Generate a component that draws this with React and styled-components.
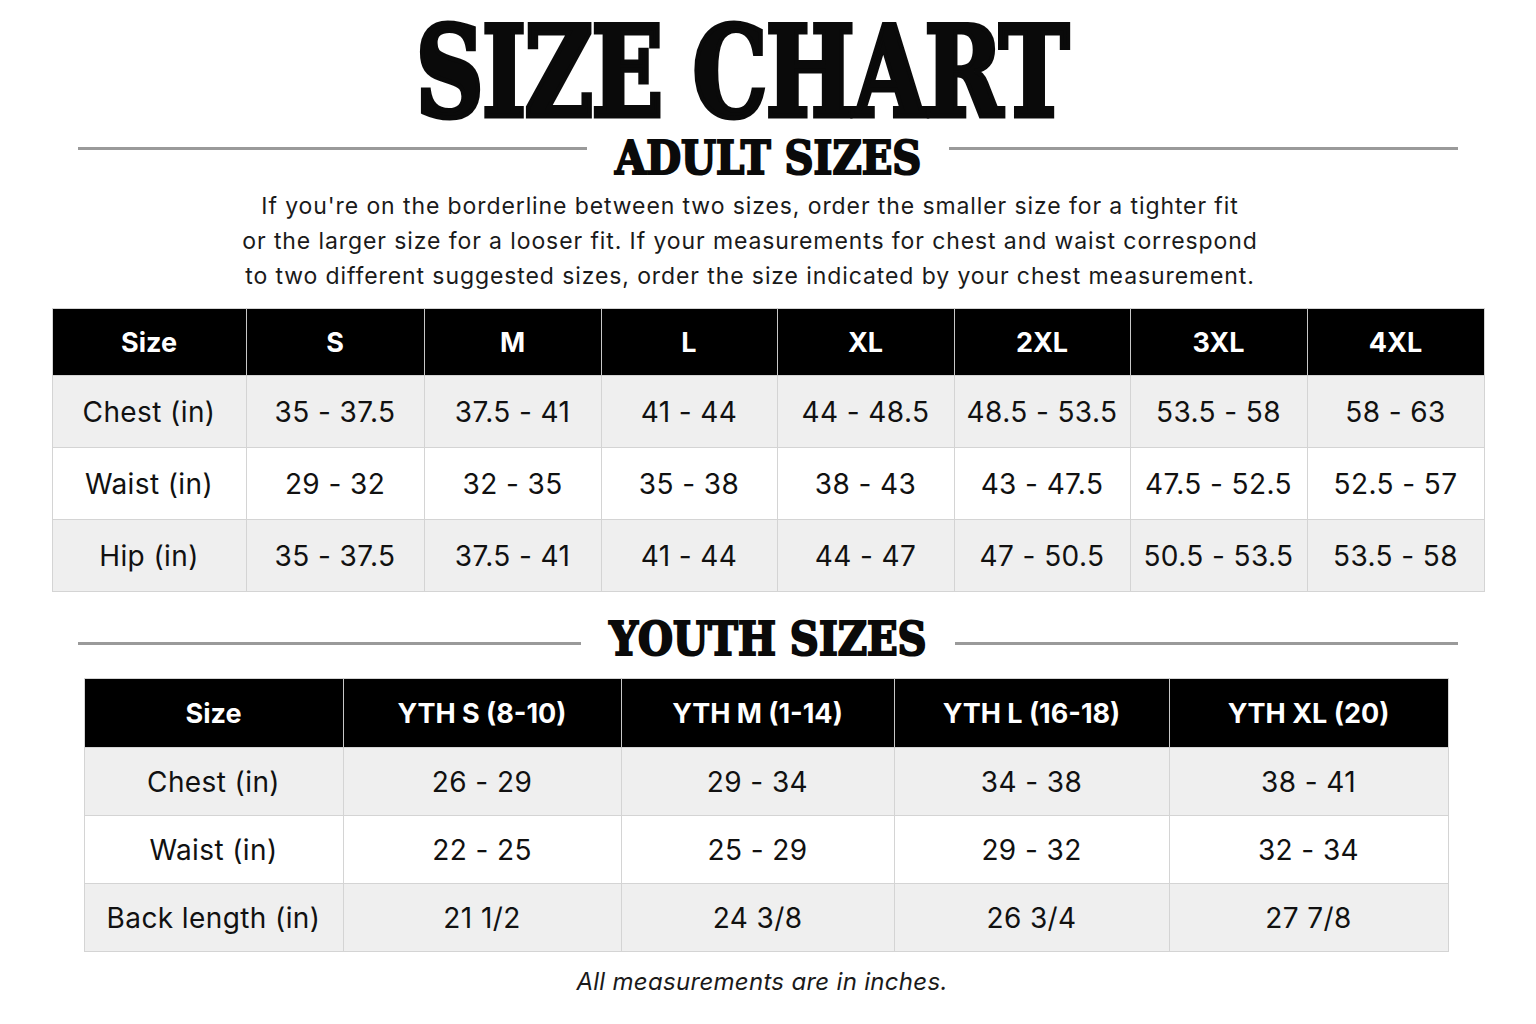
import styled, { createGlobalStyle } from 'styled-components'

const GlobalStyle = createGlobalStyle`
   html, body {
      margin: 0;
      padding: 0;
      background: #ffffff;
   }
   body {
      font-family: "Inter", "Roboto", "Liberation Sans", sans-serif;
      color: #111;
   }
`

const adultHeads = ["Size", "S", "M", "L", "XL", "2XL", "3XL", "4XL"]
const adultRows = [
   ["Chest (in)", "35 - 37.5", "37.5 - 41", "41 - 44", "44 - 48.5", "48.5 - 53.5", "53.5 - 58", "58 - 63"],
   ["Waist (in)", "29 - 32", "32 - 35", "35 - 38", "38 - 43", "43 - 47.5", "47.5 - 52.5", "52.5 - 57"],
   ["Hip (in)", "35 - 37.5", "37.5 - 41", "41 - 44", "44 - 47", "47 - 50.5", "50.5 - 53.5", "53.5 - 58"],
]
const adultCols = [194, 178, 177, 176, 177, 176, 177, 177]

const youthHeads = ["Size", "YTH S (8-10)", "YTH M (1-14)", "YTH L (16-18)", "YTH XL (20)"]
const youthRows = [
   ["Chest (in)", "26 - 29", "29 - 34", "34 - 38", "38 - 41"],
   ["Waist (in)", "22 - 25", "25 - 29", "29 - 32", "32 - 34"],
   ["Back length (in)", "21 1/2", "24 3/8", "26 3/4", "27 7/8"],
]
const youthCols = [259, 278, 273, 275, 279]

function SizeTable({ heads, rows, cols, width, headHeight, rowHeight, shift }) {
   return (
      <Table $width={width} $shift={shift}>
         <colgroup>
            {cols.map((w, i) => <col key={i} style={{ width: w }} />)}
         </colgroup>
         <thead>
            <tr>
               {heads.map((h) => <HeadCell key={h} $height={headHeight}>{h}</HeadCell>)}
            </tr>
         </thead>
         <tbody>
            {rows.map((row, r) => (
               <BodyRow key={row[0]} $shaded={r % 2 === 0}>
                  {row.map((cell, c) => <Cell key={c} $height={rowHeight}>{cell}</Cell>)}
               </BodyRow>
            ))}
         </tbody>
      </Table>
   )
}

// heading between two grey rules
function SectionTitle({ children, top, bottom, ruleShift }) {
   return (
      <SectionRow $top={top} $bottom={bottom}>
         <Rule $shift={ruleShift} />
         <SectionText>{children}</SectionText>
         <Rule $shift={ruleShift} />
      </SectionRow>
   )
}

export default function App() {
   return (
      <>
         <GlobalStyle />
         <Page>
            <Title>SIZE CHART</Title>
            <SectionTitle top={2} bottom={0} ruleShift={-10}>ADULT SIZES</SectionTitle>
            <Intro>
               If you're on the borderline between two sizes, order the smaller size for a tighter fit<br />
               or the larger size for a looser fit. If your measurements for chest and waist correspond<br />
               to two different suggested sizes, order the size indicated by your chest measurement.
            </Intro>
            <SizeTable heads={adultHeads} rows={adultRows} cols={adultCols} width={1432} headHeight={66} rowHeight={71} shift={0} />
            <SectionTitle top={26} bottom={18} ruleShift={4}>YOUTH SIZES</SectionTitle>
            <SizeTable heads={youthHeads} rows={youthRows} cols={youthCols} width={1364} headHeight={68} rowHeight={67} shift={4} />
            <Note>All measurements are in inches.</Note>
         </Page>
      </>
   )
}

const Page = styled.div`
   width: 1536px;
   height: 1024px;
   display: flex;
   flex-direction: column;
   align-items: center;
   padding-top: 9px;
   box-sizing: border-box;
   overflow: hidden;
`

const Title = styled.h1`
   margin: 0 52px 0 0;
   font-family: "DejaVu Serif Condensed", "DejaVu Serif", serif;
   font-weight: 900;
   font-size: 126px;
   line-height: 126px;
   letter-spacing: -2px;
   color: #0a0a0a;
   -webkit-text-stroke: 5px #0a0a0a;
   transform: scaleX(0.83);
`

const SectionRow = styled.div`
   width: 1380px;
   display: flex;
   align-items: center;
   gap: 20px;
   margin-top: ${(p) => p.$top}px;
   margin-bottom: ${(p) => p.$bottom}px;
`

const Rule = styled.div`
   flex: 1;
   height: 3px;
   background: #9a9a9a;
   position: relative;
   top: ${(p) => p.$shift}px;
`

const SectionText = styled.h2`
   margin: 0;
   font-family: "DejaVu Serif Condensed", "DejaVu Serif", serif;
   font-weight: 900;
   font-size: 47px;
   line-height: 42px;
   color: #0a0a0a;
   -webkit-text-stroke: 2px #0a0a0a;
   transform: scaleX(0.95);
`

const Intro = styled.p`
   margin: 10px 0 14px;
   padding-right: 36px;
   text-align: center;
   font-size: 23px;
   letter-spacing: 0.9px;
   line-height: 35px;
   color: #1a1a1a;
`

const Table = styled.table`
   width: ${(p) => p.$width}px;
   margin-right: ${(p) => p.$shift}px;
   border-collapse: collapse;
   table-layout: fixed;
   border: 1.5px solid #d4d4d4;
`

const HeadCell = styled.th`
   height: ${(p) => p.$height}px;
   padding: 0;
   background: #000;
   color: #fff;
   font-size: 27px;
   font-weight: 700;
   text-align: center;
   border-left: 1.5px solid #c8c8c8;
   &:first-child {
      border-left: none;
   }
`

const BodyRow = styled.tr`
   background: ${(p) => (p.$shaded ? '#efefef' : '#ffffff')};
`

const Cell = styled.td`
   height: ${(p) => p.$height}px;
   padding: 0;
   text-align: center;
   font-size: 28px;
   letter-spacing: 0.4px;
   color: #111;
   border: 1.5px solid #d4d4d4;
`

const Note = styled.p`
   margin: 15px 0 0;
   padding-right: 12px;
   font-size: 24px;
   letter-spacing: 0.3px;
   font-style: italic;
   color: #1a1a1a;
`
